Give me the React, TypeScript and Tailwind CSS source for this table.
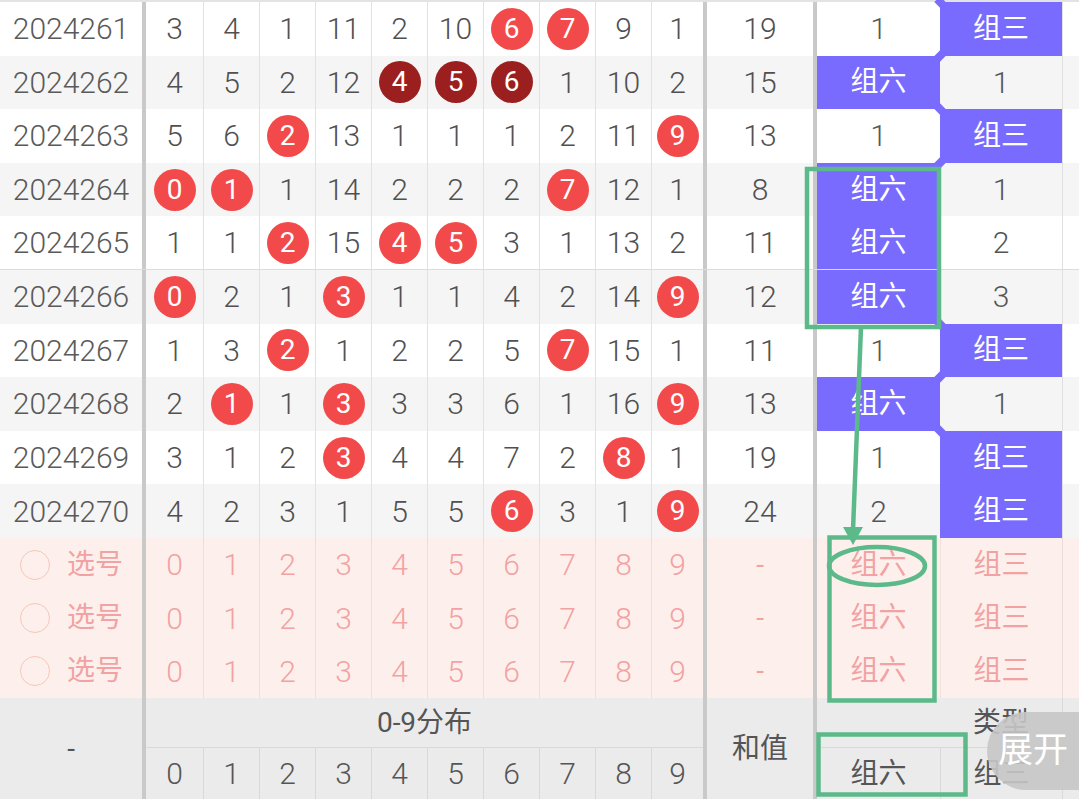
import React from "react";

type Cell = number | "H";
type Row = {
  issue: string;
  d: Cell[];
  sum: number;
  a: string;
  b: string;
  dark?: boolean;
};

const H = "H" as const;

const rows: Row[] = [
  { issue: "2024261", d: [3, 4, 1, 11, 2, 10, H, H, 9, 1], sum: 19, a: "1", b: "组三" },
  { issue: "2024262", d: [4, 5, 2, 12, H, H, H, 1, 10, 2], sum: 15, a: "组六", b: "1", dark: true },
  { issue: "2024263", d: [5, 6, H, 13, 1, 1, 1, 2, 11, H], sum: 13, a: "1", b: "组三" },
  { issue: "2024264", d: [H, H, 1, 14, 2, 2, 2, H, 12, 1], sum: 8, a: "组六", b: "1" },
  { issue: "2024265", d: [1, 1, H, 15, H, H, 3, 1, 13, 2], sum: 11, a: "组六", b: "2" },
  { issue: "2024266", d: [H, 2, 1, H, 1, 1, 4, 2, 14, H], sum: 12, a: "组六", b: "3" },
  { issue: "2024267", d: [1, 3, H, 1, 2, 2, 5, H, 15, 1], sum: 11, a: "1", b: "组三" },
  { issue: "2024268", d: [2, H, 1, H, 3, 3, 6, 1, 16, H], sum: 13, a: "组六", b: "1" },
  { issue: "2024269", d: [3, 1, 2, H, 4, 4, 7, 2, H, 1], sum: 19, a: "1", b: "组三" },
  { issue: "2024270", d: [4, 2, 3, 1, 5, 5, H, 3, 1, H], sum: 24, a: "2", b: "组三" },
];

const ROW_H = 53.6;
const junctions = [0, 1, 2, 3, 6, 7, 8];

function digitCellClass(i: number, line = "border-[#e2e2e2]") {
  if (i === 0) return "w-[57px]";
  if (i === 9) return "w-[52px] border-l " + line;
  return "w-[56px] border-l " + line;
}

function Divider() {
  return <div className="w-[4px] self-stretch bg-[#c9c9c9]" />;
}

function GroupCell({ v, w }: { v: string; w: string }) {
  const purple = v.startsWith("组");
  return (
    <div
      className={
        w +
        " flex h-full items-center justify-center " +
        (purple ? "bg-[#7a6bff] text-white text-[28px]" : "text-[#555] text-[30px] font-light")
      }
    >
      {v}
    </div>
  );
}

export default function App() {
  return (
    <div
      className="relative h-[799px] w-[1079px] overflow-hidden bg-white"
      style={{ fontFamily: 'Roboto, "Noto Sans CJK SC", sans-serif' }}
    >
      <div className="h-[2px] bg-[#e3e3e3]" />
      <div className="relative">
        {rows.map((r, ri) => (
          <div
            key={r.issue}
            className={
              "flex h-[53.6px] items-stretch " +
              (ri % 2 === 1 ? "bg-[#f5f5f5]" : "bg-white") +
              (ri === 4 ? " border-b border-[#dcdcdc]" : "")
            }
          >
            <div className="flex w-[142px] items-center justify-center text-[30px] font-light text-[#5a5a5a]">
              {r.issue}
            </div>
            <Divider />
            {r.d.map((c, i) => (
              <div
                key={i}
                className={digitCellClass(i) + " flex items-center justify-center text-[30px] font-light text-[#505050]"}
              >
                {c === "H" ? (
                  <span
                    className={
                      "flex h-[42px] w-[42px] items-center justify-center rounded-full text-[28px] font-normal text-white " +
                      (r.dark ? "bg-[#9b1f1f]" : "bg-[#f24a4a]")
                    }
                  >
                    {i}
                  </span>
                ) : (
                  c
                )}
              </div>
            ))}
            <Divider />
            <div className="flex w-[106px] items-center justify-center text-[30px] font-light text-[#505050]">
              {r.sum}
            </div>
            <Divider />
            <GroupCell v={r.a} w="w-[123px]" />
            <GroupCell v={r.b} w="w-[122px]" />
            <div className="w-px bg-[#e0e0e0]" />
            <div className="flex-1" />
          </div>
        ))}
        {junctions.map((j) => (
          <div
            key={j}
            className="absolute left-[936px] h-[8px] w-[8px] rotate-45 bg-[#7a6bff]"
            style={{ top: j * ROW_H - 4 }}
          />
        ))}
      </div>

      {[0, 1, 2].map((k) => (
        <div key={k} className="flex h-[53.4px] items-stretch bg-[#fdf0ec] text-[#f2a2a2]">
          <div className="flex w-[142px] items-center gap-[17px] pl-[20px] text-[28px]">
            <span className="h-[30px] w-[30px] rounded-full border-[1.5px] border-[#f7c6b6]" />
            <span>选号</span>
          </div>
          <Divider />
          {Array.from({ length: 10 }).map((_, i) => (
            <div key={i} className={digitCellClass(i) + " flex items-center justify-center text-[30px] font-light"}>
              {i}
            </div>
          ))}
          <Divider />
          <div className="flex w-[106px] items-center justify-center text-[28px]">-</div>
          <Divider />
          <div className="flex w-[123px] items-center justify-center text-[28px]">组六</div>
          <div className="flex w-[122px] items-center justify-center border-l border-[#f1e1dc] text-[28px]">
            组三
          </div>
          <div className="w-px bg-[#eadcd8]" />
          <div className="flex-1" />
        </div>
      ))}

      <div className="flex h-[101px] items-stretch bg-[#ebebeb] text-[#555]">
        <div className="flex w-[142px] items-center justify-center text-[28px]">-</div>
        <Divider />
        <div className="flex w-[557px] flex-col">
          <div className="flex h-[49px] items-center justify-center text-[28px]">0-9分布</div>
          <div className="flex flex-1 border-t border-[#d9d9d9]">
            {Array.from({ length: 10 }).map((_, i) => (
              <div
                key={i}
                className={digitCellClass(i, "border-[#d9d9d9]") + " flex items-center justify-center text-[30px] font-light"}
              >
                {i}
              </div>
            ))}
          </div>
        </div>
        <Divider />
        <div className="flex w-[106px] items-center justify-center text-[28px]">和值</div>
        <Divider />
        <div className="flex w-[245px] flex-col">
          <div className="flex h-[49px]">
            <div className="w-[123px]" />
            <div className="flex w-[122px] items-center justify-center text-[28px]">类型</div>
          </div>
          <div className="flex flex-1 border-t border-[#d9d9d9]">
            <div className="flex w-[123px] items-center justify-center text-[28px]">组六</div>
            <div className="flex w-[122px] items-center justify-center border-l border-[#d9d9d9] text-[28px]">
              组三
            </div>
          </div>
        </div>
        <div className="w-px bg-[#d9d9d9]" />
        <div className="flex-1" />
      </div>

      <svg
        className="pointer-events-none absolute left-0 top-0"
        width="1079"
        height="799"
        viewBox="0 0 1079 799"
      >
        <g stroke="#5cb98a" strokeWidth="4.5" fill="none">
          <rect x="807" y="169" width="132" height="158" />
          <line x1="861" y1="327" x2="853" y2="530" />
          <rect x="829.5" y="537.5" width="105" height="163" />
          <ellipse cx="877" cy="566" rx="48" ry="19" />
          <rect x="818.5" y="734.5" width="147" height="60" />
        </g>
        <polygon points="843,527 863,527 853,545" fill="#5cb98a" />
      </svg>

      <div className="absolute left-[987px] top-[712px] flex h-[78px] w-[130px] items-center rounded-full bg-[#c6c6c6]/90 pl-[11px] text-[35px] text-white">
        展开
      </div>
    </div>
  );
}
